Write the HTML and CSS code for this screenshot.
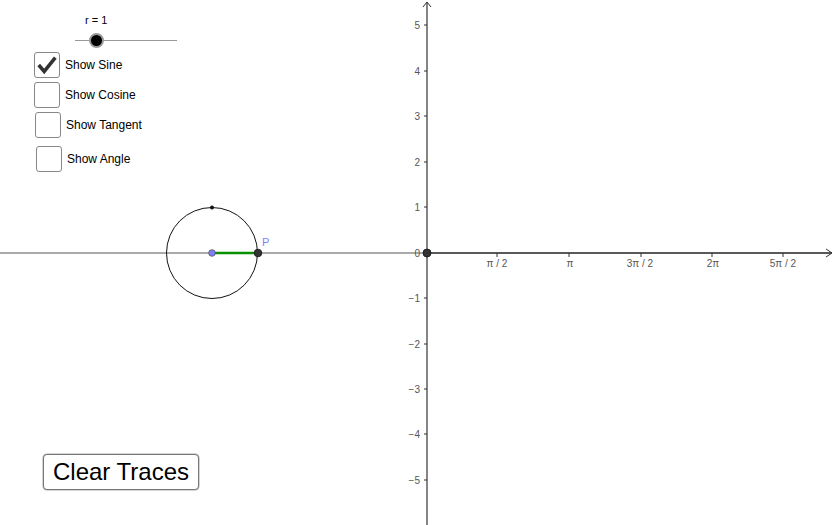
FILE: index.html
```html
<!DOCTYPE html>
<html>
<head>
  <meta charset="utf-8" />
  <title>Unit Circle</title>
  <link rel="stylesheet" href="styles.css">
</head>
<body>
  <div class="applet">
    <svg class="canvas" width="835" height="525" viewBox="0 0 835 525">
      <!-- x axis -->
      <line x1="0" y1="253" x2="427" y2="253" stroke="#555" stroke-width="1"/>
      <line x1="427" y1="253" x2="832" y2="253" stroke="#222" stroke-width="1.6"/>
      <polyline points="826,249 832,253 826,257" fill="none" stroke="#333" stroke-width="1"/>
      <!-- y axis -->
      <line x1="427" y1="2" x2="427" y2="525" stroke="#333" stroke-width="1.2"/>
      <polyline points="423,7 427,2 431,7" fill="none" stroke="#333" stroke-width="1"/>

      <g stroke="#333" stroke-width="1">
        <line x1="424" y1="25" x2="427" y2="25"/>
        <line x1="424" y1="71" x2="427" y2="71"/>
        <line x1="424" y1="116" x2="427" y2="116"/>
        <line x1="424" y1="162" x2="427" y2="162"/>
        <line x1="424" y1="207" x2="427" y2="207"/>
        <line x1="424" y1="298" x2="427" y2="298"/>
        <line x1="424" y1="344" x2="427" y2="344"/>
        <line x1="424" y1="389" x2="427" y2="389"/>
        <line x1="424" y1="434" x2="427" y2="434"/>
        <line x1="424" y1="480" x2="427" y2="480"/>
        <line x1="497" y1="253" x2="497" y2="257"/>
        <line x1="569" y1="253" x2="569" y2="257"/>
        <line x1="641" y1="253" x2="641" y2="257"/>
        <line x1="712" y1="253" x2="712" y2="257"/>
        <line x1="783" y1="253" x2="783" y2="257"/>
      </g>

      <g class="tick-label" text-anchor="end">
        <text x="420" y="29">5</text>
        <text x="420" y="75">4</text>
        <text x="420" y="120">3</text>
        <text x="420" y="166">2</text>
        <text x="420" y="211">1</text>
        <text x="420" y="257">0</text>
        <text x="420" y="302">−1</text>
        <text x="420" y="348">−2</text>
        <text x="420" y="393">−3</text>
        <text x="420" y="438">−4</text>
        <text x="420" y="484">−5</text>
      </g>
      <g class="tick-label" text-anchor="middle">
        <text x="497" y="267">π / 2</text>
        <text x="570" y="267">π</text>
        <text x="640" y="267">3π / 2</text>
        <text x="713" y="267">2π</text>
        <text x="783" y="267">5π / 2</text>
      </g>

      <!-- unit circle -->
      <circle cx="212" cy="253" r="45.5" fill="none" stroke="#111" stroke-width="1"/>
      <line x1="212" y1="253" x2="258" y2="253" stroke="#089000" stroke-width="2.6"/>
      <circle cx="212" cy="207.5" r="2" fill="#111"/>
      <circle cx="212" cy="253" r="3.3" fill="#7f7fff" stroke="#555" stroke-width="0.8"/>
      <circle cx="258" cy="253" r="3.8" fill="#333" stroke="#111" stroke-width="0.8"/>
      <text class="point-label" x="262" y="246">P</text>

      <circle cx="427" cy="253" r="4" fill="#333" stroke="#111" stroke-width="0.8"/>
    </svg>

    <div class="controls">
      <div class="slider">
        <span class="slider-value">r = 1</span>
        <div class="slider-track">
          <span class="slider-knob"></span>
        </div>
      </div>

      <label class="check-row">
        <span class="check-box">
          <svg width="26" height="26" viewBox="0 0 26 26">
            <polyline points="4,13 10,20 22,5" fill="none" stroke="#333" stroke-width="3.8" stroke-linejoin="miter"/>
          </svg>
        </span>
        Show Sine
      </label>
      <label class="check-row">
        <span class="check-box"></span>
        Show Cosine
      </label>
      <label class="check-row shift-1">
        <span class="check-box"></span>
        Show Tangent
      </label>
      <label class="check-row shift-2 spaced">
        <span class="check-box"></span>
        Show Angle
      </label>
    </div>

    <button class="clear-btn">Clear Traces</button>
  </div>
</body>
</html>
```

FILE: styles.css
```css
body{
	margin: 0;
	background: #fff;
	font-family: "Liberation Sans", Arial, sans-serif;
}

.applet{
	position: relative;
	width: 835px;
	height: 525px;
	overflow: hidden;
	background: #fff;
}

.canvas{
	display: block;
}

.tick-label{
	font-family: "Liberation Sans", Arial, sans-serif;
	font-size: 10px;
	fill: #555;
}

.point-label{
	font-family: "Liberation Sans", Arial, sans-serif;
	font-size: 11px;
	fill: #7f7fff;
}

/* overlay with the slider and checkboxes */
.controls{
	position: absolute;
	left: 34px;
	top: 14px;
	display: flex;
	flex-direction: column;
	gap: 4px;
}

.slider{
	display: flex;
	flex-direction: column;
	align-items: flex-start;
	margin-left: 41px;
	height: 34px;
}

.slider-value{
	font-size: 11px;
	color: #000;
	margin-left: 10px;
	line-height: 13px;
}

.slider-track{
	position: relative;
	width: 102px;
	height: 1px;
	background: #999;
	margin-top: 13px;
}

.slider-knob{
	position: absolute;
	left: 14px;
	top: -7px;
	width: 11px;
	height: 11px;
	border-radius: 50%;
	background: #000;
	border: 2px solid #999;
}

.check-row{
	display: flex;
	align-items: center;
	gap: 5px;
	font-size: 12px;
	color: #000;
	height: 26px;
}

.check-row.shift-1{
	margin-left: 1px;
}

.check-row.shift-2{
	margin-left: 2px;
}

.check-row.spaced{
	margin-top: 4px;
}

.check-box{
	width: 24px;
	height: 24px;
	border: 1px solid #888;
	border-radius: 3px;
	background: #fff;
	display: flex;
	align-items: center;
	justify-content: center;
}

.clear-btn{
	position: absolute;
	left: 43px;
	top: 454px;
	width: 156px;
	height: 36px;
	font-family: "Liberation Sans", Arial, sans-serif;
	font-size: 24px;
	color: #000;
	background: #fff;
	border: 1px solid #777;
	border-radius: 4px;
	padding: 0;
	box-shadow: 0 0 0 0.5px #aaa;
}
```
